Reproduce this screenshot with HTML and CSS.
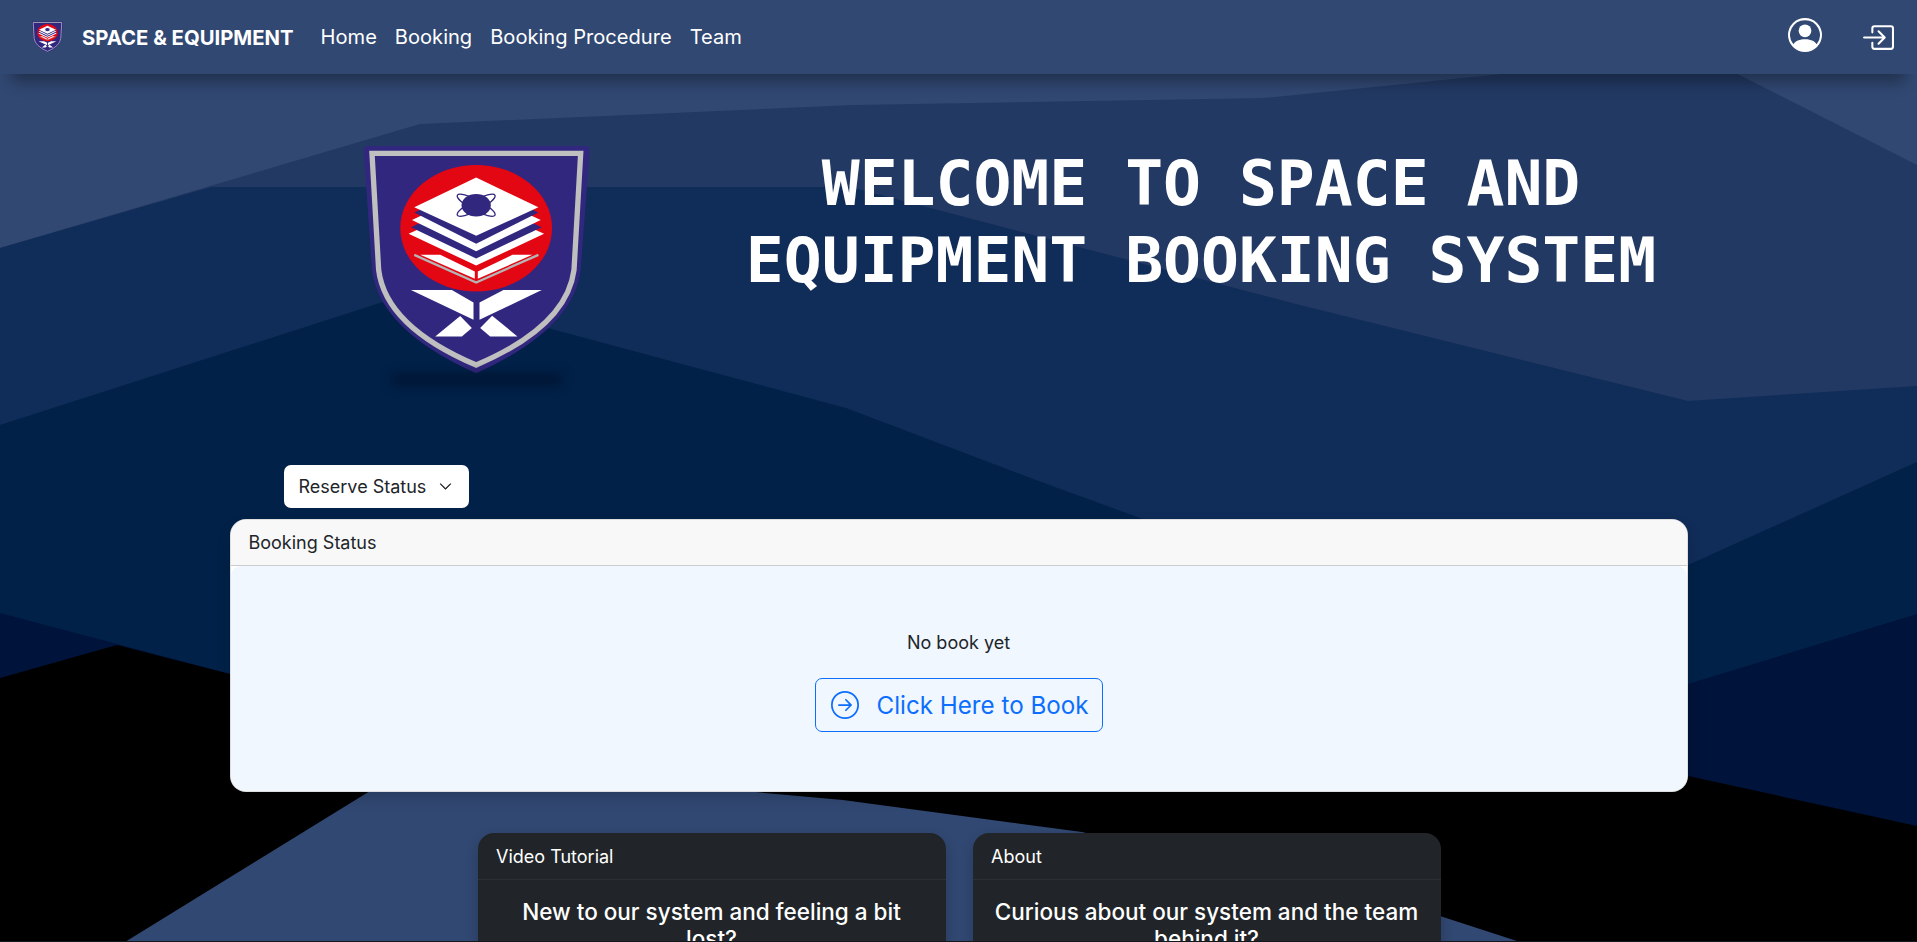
FILE: index.html
```html
<!DOCTYPE html>
<html lang="en">
<head>
<meta charset="utf-8">
<title>Space &amp; Equipment</title>
<link rel="stylesheet" href="styles.css">
</head>
<body>
<svg class="backdrop" viewBox="0 0 1917 942" aria-hidden="true">
  <rect class="l0" width="1917" height="942"/>
  <polygon class="l1" points="0,248 420,124 854,105 1264,98 1502,74 1600,60 1710,60 1917,165 1917,942 0,942"/>
  <polygon class="l2" points="0,248 211,187 850,187 1300,305 1688,401 1917,386 1917,942 0,942"/>
  <polygon class="l3" points="0,425 414,292 555,330 846,408 1036,480 1200,540 1688,565 1917,462 1917,942 0,942"/>
  <polygon class="l4" points="0,613 230,674 1000,720 1688,684 1917,614 1917,942 0,942"/>
  <polygon class="l5" points="0,678 117,645 230,674 1000,720 1688,776 1917,826 1917,942 0,942"/>
  <polygon class="l0" points="125,942 370,791 400,772 600,772 744,791 843,800 1082,832 1440,916 1520,942"/>
</svg>

<nav class="navbar">
  <a class="brand" href="#">
    <svg class="brand-logo" viewBox="68 48 682 682" aria-hidden="true">
      <g id="crest">
        <path class="c-edge" d="M70 62Q69 48 84 48L734 48Q750 48 749 62L722 420Q700 600 408 731Q116 600 95 420Z"/>
        <path class="c-field" d="M95 70L722 70L702 420Q680 590 408 706Q136 590 115 420Z"/>
        <ellipse class="c-red" cx="408" cy="295" rx="228" ry="190"/>
        <polygon class="c-white" points="205,312 408,220 612,312 408,407"/>
        <polygon class="c-field-flat" points="212,292 408,200 605,292 408,386"/>
        <polygon class="c-white" points="215,270 408,180 602,270 408,364"/>
        <polygon class="c-field-flat" points="222,248 408,160 595,248 408,342"/>
        <polygon class="c-white" points="222,232 408,143 595,232 408,318"/>
        <ellipse class="c-field-flat" cx="408" cy="226" rx="44" ry="34"/>
        <ellipse class="c-orbit" cx="408" cy="226" rx="64" ry="16" transform="rotate(28 408 226)"/>
        <ellipse class="c-orbit" cx="408" cy="226" rx="64" ry="16" transform="rotate(-28 408 226)"/>
        <polygon class="c-white" points="240,375 300,375 404,425 404,447"/>
        <polygon class="c-white" points="577,375 517,375 413,425 413,447"/>
        <polyline class="c-grey" points="222,375 408,458 595,375"/>
        <polygon class="c-white" points="212,481 335,481 400,518 400,570"/>
        <polygon class="c-white" points="605,481 490,481 418,518 418,570"/>
        <polygon class="c-white" points="285,620 360,559 395,595 365,620"/>
        <polygon class="c-white" points="532,620 456,558 420,595 450,620"/>
      </g>
    </svg>
    <span>SPACE &amp; EQUIPMENT</span>
  </a>
  <ul class="nav-links">
    <li><a href="#">Home</a></li>
    <li><a href="#">Booking</a></li>
    <li><a href="#">Booking Procedure</a></li>
    <li><a href="#">Team</a></li>
  </ul>
  <div class="nav-icons">
    <svg class="icon-user" viewBox="0 0 16 16" aria-hidden="true"><path d="M11 6a3 3 0 1 1-6 0 3 3 0 0 1 6 0"/><path fill-rule="evenodd" d="M0 8a8 8 0 1 1 16 0A8 8 0 0 1 0 8m8-7a7 7 0 0 0-5.468 11.37C3.242 11.226 4.805 10 8 10s4.757 1.225 5.468 2.37A7 7 0 0 0 8 1"/></svg>
    <svg class="icon-login" viewBox="0 0 16 16" aria-hidden="true"><path fill-rule="evenodd" d="M6 3.5a.5.5 0 0 1 .5-.5h8a.5.5 0 0 1 .5.5v9a.5.5 0 0 1-.5.5h-8a.5.5 0 0 1-.5-.5v-2a.5.5 0 0 0-1 0v2A1.5 1.5 0 0 0 6.5 14h8a1.5 1.5 0 0 0 1.5-1.5v-9A1.5 1.5 0 0 0 14.5 2h-8A1.5 1.5 0 0 0 5 3.5v2a.5.5 0 0 0 1 0z"/><path fill-rule="evenodd" d="M11.854 8.354a.5.5 0 0 0 0-.708l-3-3a.5.5 0 1 0-.708.708L10.293 7.5H1.5a.5.5 0 0 0 0 1h8.793l-2.147 2.146a.5.5 0 0 0 .708.708z"/></svg>
  </div>
</nav>

<header class="hero">
  <div class="hero-logo">
    <svg class="hero-crest" viewBox="68 48 682 682" aria-hidden="true"><use href="#crest"/></svg>
    <div class="hero-shadow"></div>
  </div>
  <h1 class="hero-title">WELCOME TO SPACE AND EQUIPMENT BOOKING SYSTEM</h1>
</header>

<main class="content">
  <div class="filter-row">
    <button class="filter-btn" type="button">Reserve Status
      <svg class="chevron" viewBox="0 0 16 16" aria-hidden="true"><path fill-rule="evenodd" d="M1.646 4.646a.5.5 0 0 1 .708 0L8 10.293l5.646-5.647a.5.5 0 0 1 .708.708l-6 6a.5.5 0 0 1-.708 0l-6-6a.5.5 0 0 1 0-.708"/></svg>
    </button>
  </div>

  <section class="status-card">
    <div class="status-head">Booking Status</div>
    <div class="status-body">
      <p class="status-text">No book yet</p>
      <a class="book-btn" href="#">
        <svg class="book-icon" viewBox="0 0 16 16" aria-hidden="true"><path fill-rule="evenodd" d="M1 8a7 7 0 1 0 14 0A7 7 0 0 0 1 8m15 0A8 8 0 1 1 0 8a8 8 0 0 1 16 0M4.5 7.5a.5.5 0 0 0 0 1h5.793l-2.147 2.146a.5.5 0 0 0 .708.708l3-3a.5.5 0 0 0 0-.708l-3-3a.5.5 0 1 0-.708.708L10.293 7.5z"/></svg>
        <span>Click Here to Book</span>
      </a>
    </div>
  </section>

  <div class="info-row">
    <section class="info-card">
      <div class="info-head">Video Tutorial</div>
      <div class="info-body"><h5 class="info-title">New to our system and feeling a bit lost?</h5></div>
    </section>
    <section class="info-card">
      <div class="info-head">About</div>
      <div class="info-body"><h5 class="info-title">Curious about our system and the team behind it?</h5></div>
    </section>
  </div>
</main>
</body>
</html>
```
FILE: styles.css
```css
* { box-sizing: border-box; }

html, body { margin: 0; height: 100%; }

body {
  position: relative;
  z-index: 0;
  height: 942px;
  overflow: hidden;
  font-family: "Inter", "Liberation Sans", sans-serif;
  color: #212529;
  background: #000;
  border-bottom: 1px solid #14171c;
}

.backdrop {
  position: absolute;
  inset: 0;
  width: 1917px;
  height: 942px;
  z-index: -1;
  display: block;
}
.l0 { fill: #314872; }
.l1 { fill: #223963; }
.l2 { fill: #102c58; }
.l3 { fill: #012148; }
.l4 { fill: #00133a; }
.l5 { fill: #000; }

/* nav */
.navbar {
  height: 74px;
  display: flex;
  align-items: center;
  padding: 0 23px 0 32px;
  background: #314872;
  box-shadow: 0 20px 14px -12px rgba(0, 0, 0, .32);
}
.brand {
  display: flex;
  align-items: center;
  gap: 19px;
  color: #fff;
  text-decoration: none;
  font-weight: 700;
  font-size: 20.3px;
}
.brand-logo { width: 31px; height: 32px; display: block; }
.nav-links {
  display: flex;
  gap: 18px;
  list-style: none;
  margin: 0 0 0 27px;
  padding: 0;
  font-size: 20.1px;
}
.nav-links a { color: #fff; text-decoration: none; }
.nav-icons {
  margin-left: auto;
  display: flex;
  align-items: center;
  gap: 39px;
}
.icon-user, .icon-login { display: block; fill: #fff; }
.icon-user { width: 34px; height: 34px; margin-bottom: 4px; }
.icon-login { width: 33px; height: 33px; }

/* crest */
.c-edge { fill: #32277f; }
.c-field { fill: #32277f; stroke: #bfbfbf; stroke-width: 16; }
.c-field-flat { fill: #32277f; }
.c-red { fill: #e30613; }
.c-white { fill: #fff; }
.c-orbit { fill: none; stroke: #32277f; stroke-width: 4; }
.c-grey { fill: none; stroke: #b5b5b5; stroke-width: 7; }

/* hero */
.hero {
  display: flex;
  align-items: flex-start;
  padding: 70px 215px 0 363px;
  height: 391px;
}
.hero-logo { width: 227px; flex: none; margin-top: 2px; }
.hero-crest { display: block; width: 227px; height: 227px; }
.hero-shadow {
  width: 170px;
  height: 11px;
  margin: 1px auto 0;
  background: rgba(0, 6, 28, .5);
  filter: blur(6px);
}
.hero-title {
  flex: 1;
  margin: 1px 0 0 110px;
  font-family: "DejaVu Sans Mono", monospace;
  font-weight: 700;
  font-size: 63px;
  line-height: 77px;
  color: #fff;
  text-align: center;
}

/* content */
.content { width: 1458px; margin: 0 auto; }
.filter-row { padding-left: 54px; height: 54px; }
.filter-btn {
  display: inline-flex;
  align-items: center;
  gap: 13px;
  width: 185px;
  height: 43px;
  padding: 0 15px;
  border: 0;
  border-radius: 7px;
  background: #fff;
  color: #212529;
  font: 400 18px "Inter", sans-serif;
  white-space: nowrap;
}
.chevron { width: 13px; height: 13px; fill: #212529; stroke: #212529; stroke-width: .8; flex: none; }

.status-card {
  height: 273px;
  display: flex;
  flex-direction: column;
  background: #fff;
  border: 1px solid rgba(0, 0, 0, .13);
  border-radius: 16px;
  overflow: hidden;
  box-shadow: 0 6px 14px rgba(0, 0, 0, .15);
}
.status-head {
  height: 46px;
  flex: none;
  padding: 0 18px;
  display: flex;
  align-items: center;
  background: #f8f8f8;
  border-bottom: 1px solid #ccc;
  font-size: 18px;
}
.status-body {
  flex: 1;
  display: flex;
  flex-direction: column;
  align-items: center;
  padding-top: 64px;
  background: #f0f7ff;
  border-radius: 10px;
}
.status-text { margin: 0 0 23px; font-size: 18px; line-height: 25px; }
.book-btn {
  display: flex;
  align-items: center;
  gap: 18px;
  height: 54px;
  width: 288px;
  padding: 0 15px;
  border: 1px solid #0d6efd;
  border-radius: 7px;
  color: #0d6efd;
  text-decoration: none;
  font-size: 24.2px;
  white-space: nowrap;
}
.book-icon { width: 28px; height: 28px; fill: #0d6efd; flex: none; }

.info-row {
  display: flex;
  justify-content: center;
  gap: 27px;
  margin-top: 41px;
  padding-left: 2px;
}
.info-card {
  width: 468px;
  height: 300px;
  background: #212529;
  color: #fff;
  border-radius: 16px;
  box-shadow: 0 6px 14px rgba(0, 0, 0, .2);
}
.info-head {
  height: 47px;
  padding: 0 18px;
  display: flex;
  align-items: center;
  font-size: 18px;
  border-bottom: 1px solid #2c3034;
}
.info-body { padding: 18px 21px 0 20px; }
.info-title {
  margin: 0;
  font-size: 22.5px;
  font-weight: 500;
  line-height: 1.2;
  text-align: center;
}
```
